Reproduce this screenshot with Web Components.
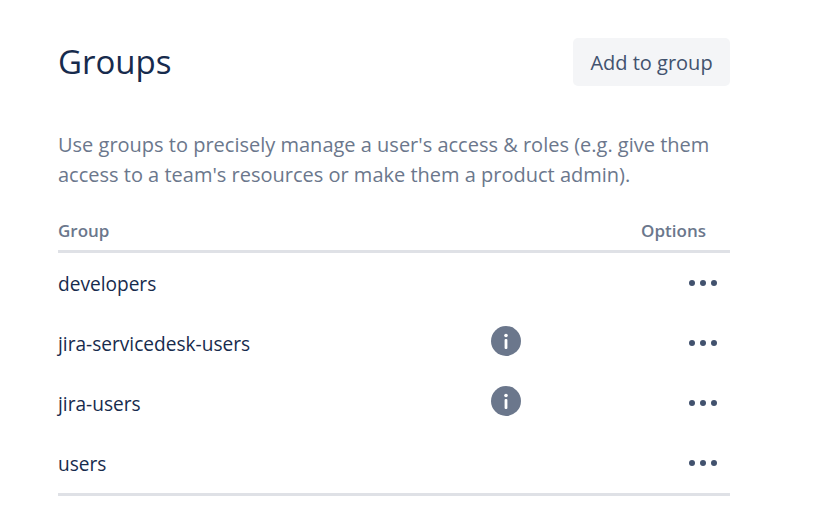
<!DOCTYPE html>
<html>
<head>
<meta charset="utf-8">
<style>
html, body { margin: 0; background: #fff; }
body { font-family: "Open Sans", "Noto Sans", sans-serif; overflow: hidden; }
</style>
</head>
<body>
<groups-panel>
	<span slot="title">Groups</span>
	<span slot="action">Add to group</span>
	<span slot="description">Use groups to precisely manage a user's access &amp; roles (e.g. give them access to a team's resources or make them a product admin).</span>
	<group-row name="developers"></group-row>
	<group-row name="jira-servicedesk-users" info></group-row>
	<group-row name="jira-users" info></group-row>
	<group-row name="users"></group-row>
</groups-panel>
<script>
class GroupsPanel extends HTMLElement {
	constructor() {
		super();
		let shadowRoot = this.attachShadow({mode: 'open'});
		shadowRoot.innerHTML = `
		<style>
		:host {
			display: block;
			width: 672px;
			padding: 38px 0 0 58px;
		}
		header {
			display: flex;
			justify-content: space-between;
			align-items: flex-start;
			height: 48px;
		}
		h1 {
			margin: 0;
			font-size: 33px;
			line-height: 48px;
			font-weight: 400;
			color: #172B4D;
		}
		button {
			width: 157px;
			height: 48px;
			padding: 0;
			border: 0;
			border-radius: 5px;
			background: #F4F5F7;
			color: #42526E;
			font: inherit;
			font-size: 20px;
		}
		p {
			margin: 0;
			padding-top: 44px;
			font-size: 20px;
			line-height: 30px;
			color: #6B778C;
		}
		.head {
			display: flex;
			justify-content: space-between;
			height: 40px;
			margin-top: 20px;
			padding: 0 24px 0 0;
			border-bottom: 3px solid #DFE1E6;
			font-size: 17px;
			line-height: 42px;
			font-weight: 600;
			color: #6B778C;
		}
		.rows {
			border-bottom: 3px solid #DFE1E6;
			width: 672px;
		}
		</style>
		<header>
			<h1><slot name="title"></slot></h1>
			<button><slot name="action"></slot></button>
		</header>
		<p><slot name="description"></slot></p>
		<div class="head"><span>Group</span><span>Options</span></div>
		<div class="rows"><slot></slot></div>`;
	}
}
window.customElements.define('groups-panel', GroupsPanel);

class GroupRow extends HTMLElement {
	constructor() {
		super();
		let shadowRoot = this.attachShadow({mode: 'open'});
		shadowRoot.innerHTML = `
		<style>
		:host {
			display: grid;
			grid-template-columns: 433px 30px 1fr;
			align-items: center;
			height: 60px;
			font-size: 19.1px;
			color: #172B4D;
		}
		#name {
			padding-top: 2px;
		}
		.info {
			display: none;
			width: 30px;
			height: 30px;
			margin-bottom: 5px;
		}
		:host([info]) .info {
			display: block;
		}
		.more {
			grid-column: 3;
			justify-self: end;
			display: flex;
			gap: 5px;
			margin-right: 13px;
			margin-bottom: 1px;
		}
		.more i {
			width: 6px;
			height: 6px;
			border-radius: 50%;
			background: #42526E;
		}
		</style>
		<span id="name"></span>
		<svg class="info" viewBox="0 0 30 30">
			<circle cx="15" cy="15" r="15" fill="#6B778C"/>
			<circle cx="15" cy="9.5" r="1.8" fill="#fff"/>
			<rect x="13.6" y="13" width="2.8" height="10" rx="1" fill="#fff"/>
		</svg>
		<div class="more"><i></i><i></i><i></i></div>`;
		shadowRoot.getElementById('name').textContent = this.getAttribute('name');
	}
}
window.customElements.define('group-row', GroupRow);
</script>
</body>
</html>
